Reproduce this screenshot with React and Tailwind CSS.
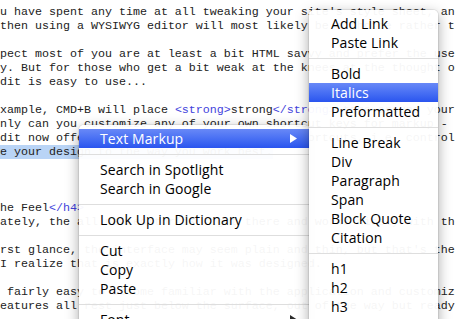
import React from "react";

const T = (t) => ({ t });
const G = (t) => ({ t, c: "tag" });

const lines = [
  [T("u have spent any time at all tweaking your site's style sheet, and")],
  [T("then using a WYSIWYG editor will most likely be a choice rather than")],
  [],
  [T("pect most of you are at least a bit HTML savvy and prefer the use of")],
  [T("y. But for those who get a bit weak at the knees at the thought of")],
  [T("dit is easy to use...")],
  [],
  [T("xample, CMD+B will place "), G("<strong>"), T("strong"), G("</strong>"), T(" tags around your")],
  [T("nly can you customize any of your own shortcut keys for markup - ")],
  [T("dit now offers a number of useful default shortcuts, i.e. control-")],
  [{ t: "e your design to the way you work best.", c: "sel" }],
  [],
  [],
  [],
  [T("he Feel"), G("</h4>")],
  [T("ately, the all new editor is right there and works nicely with the")],
  [],
  [T("rst glance, the interface may seem plain and thin, but that's the")],
  [T("I realize that is exactly how it was designed.")],
  [],
  [T(" fairly easy to become familiar with the application and customize")],
  [T("eatures all rest just below the surface, out of the way but ready")],
];

function Arrow({ color }) {
  return (
    <svg width="7" height="9" viewBox="0 0 7 9" className="shrink-0">
      <polygon points="0,0 7,4.5 0,9" fill={color} />
    </svg>
  );
}

function Item({ label, active, arrow, pl }) {
  return (
    <div
      className={
        "h-[19px] flex items-center pr-[13px] whitespace-nowrap " +
        (active
          ? "bg-linear-to-b from-[#6888f7] to-[#2a54ef] text-white"
          : "text-black")
      }
      style={{ paddingLeft: pl }}
    >
      <span className="flex-1">{label}</span>
      {arrow && <Arrow color={active ? "#ffffff" : "#2a2a2a"} />}
    </div>
  );
}

function Sep() {
  return (
    <div className="h-[12px] flex items-center">
      <div className="h-px w-full bg-[#dedede]" />
    </div>
  );
}

const mainItems = [
  ["Text Markup", true, true],
  "-",
  ["Search in Spotlight"],
  ["Search in Google"],
  "-",
  ["Look Up in Dictionary"],
  "-",
  ["Cut"],
  ["Copy"],
  ["Paste"],
  "-",
  ["Font", false, true],
  ["Spelling and Grammar", false, true],
];

const subItems = [
  ["Add Link"],
  ["Paste Link"],
  "-",
  ["Bold"],
  ["Italics", true],
  ["Preformatted"],
  "-",
  ["Line Break"],
  ["Div"],
  ["Paragraph"],
  ["Span"],
  ["Block Quote"],
  ["Citation"],
  "-",
  ["h1"],
  ["h2"],
  ["h3"],
  ["h4"],
];

function Menu({ items, className, pl }) {
  return (
    <div
      className={
        "absolute py-[4px] rounded-[5px] bg-white/[0.955] shadow-[0_0_0_1px_rgba(0,0,0,0.07),0_4px_14px_rgba(0,0,0,0.35)] font-['Open_Sans',sans-serif] text-[14px] leading-[19px] tracking-[0.1px] " +
        className
      }
    >
      {items.map((it, i) =>
        it === "-" ? (
          <Sep key={i} />
        ) : (
          <Item key={i} label={it[0]} active={it[1]} arrow={it[2]} pl={pl} />
        )
      )}
    </div>
  );
}

export default function App() {
  return (
    <div className="relative w-[455px] h-[319px] overflow-hidden bg-white">
      <div className="pt-[5px] font-['Liberation_Mono',monospace] text-[11.67px] leading-[14px] text-[#222] whitespace-pre">
        {lines.map((segs, i) => (
          <div key={i} className="h-[14px]">
            {segs.length === 0
              ? " "
              : segs.map((s, j) => (
                  <span
                    key={j}
                    className={
                      s.c === "tag"
                        ? "text-[#4343dc]"
                        : s.c === "sel"
                        ? "bg-[#b9d4f6]"
                        : ""
                    }
                  >
                    {s.t}
                  </span>
                ))}
          </div>
        ))}
      </div>
      <Menu items={mainItems} className="left-[79px] top-[125px] w-[231px]" pl={21} />
      <Menu items={subItems} className="left-[309px] top-[10px] w-[129px]" pl={22} />
    </div>
  );
}
